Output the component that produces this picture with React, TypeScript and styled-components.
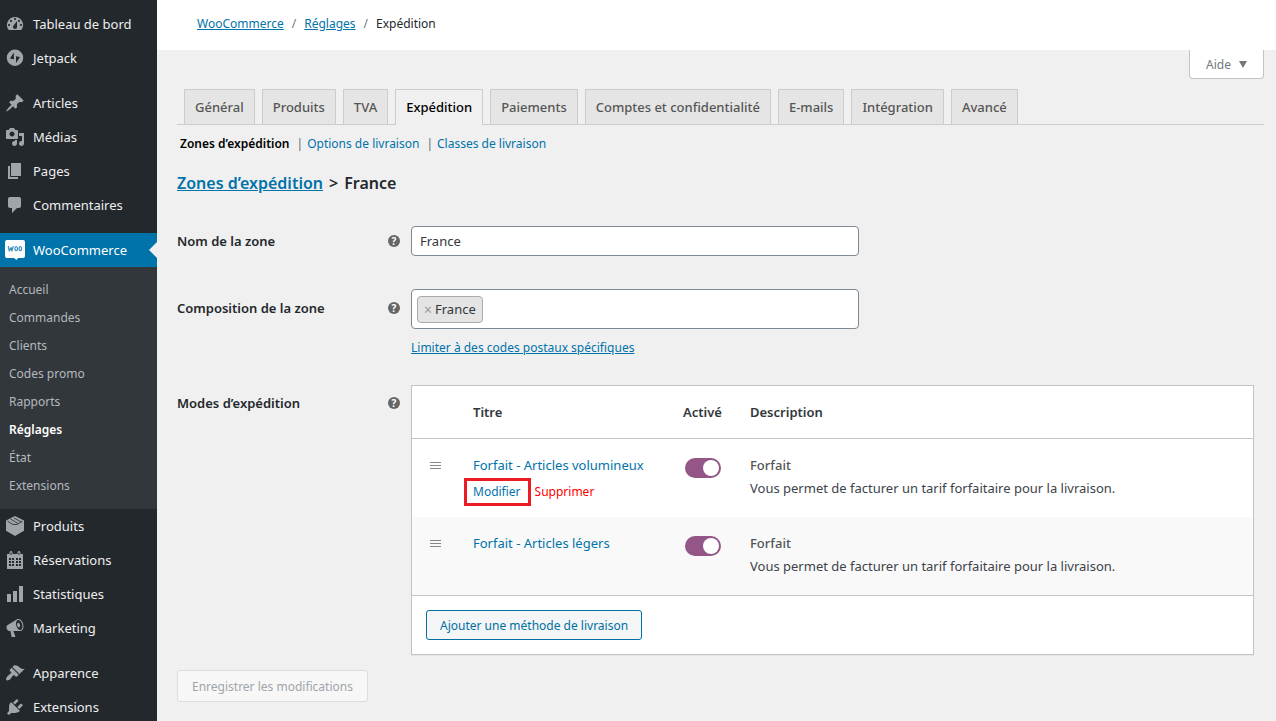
import React, { useState } from "react";
import styled, { createGlobalStyle } from "styled-components";

const Global = createGlobalStyle`
  *, *::before, *::after { box-sizing: border-box; }
  body {
    margin: 0;
    background: #f0f0f0;
    color: #3c434a;
    font-family: "Noto Sans", "Open Sans", sans-serif;
    font-size: 13px;
    line-height: 20px;
  }
  a { color: #0073aa; }
  button, input { font: inherit; }
`;

const Shell = styled.div`
  display: flex;
  height: 100vh;
  overflow: hidden;
`;

/* ---------- side menu ---------- */

const Side = styled.nav`
  flex: 0 0 157px;
  padding-top: 7px;
  background: #23282d;
`;

const Menu = styled.ul`
  list-style: none;
  margin: 0 0 11px;
  padding: 0;
`;

const MenuLink = styled.a<{ $active?: boolean }>`
  position: relative;
  display: flex;
  align-items: center;
  gap: 8px;
  height: 34px;
  padding-left: 5px;
  color: ${(p) => (p.$active ? "#fff" : "#eee")};
  background: ${(p) => (p.$active ? "#0073aa" : "transparent")};
  font-size: 13px;
  text-decoration: none;
  svg { flex: none; fill: ${(p) => (p.$active ? "#fff" : "#a0a5aa")}; }
  &::after {
    content: "";
    display: ${(p) => (p.$active ? "block" : "none")};
    position: absolute;
    right: 0;
    border: 8px solid transparent;
    border-left-width: 0;
    border-right-color: #f0f0f0;
  }
`;

const SubMenu = styled.ul`
  list-style: none;
  margin: 0;
  padding: 9px 0;
  background: #32373c;
`;

const SubLink = styled.a<{ $current?: boolean }>`
  display: block;
  padding: 4px 9px;
  font-size: 12px;
  font-weight: ${(p) => (p.$current ? 600 : 400)};
  color: ${(p) => (p.$current ? "#fff" : "#b4b9be")};
  text-decoration: none;
`;

/* ---------- page frame ---------- */

const Page = styled.div`
  flex: 1;
  min-width: 0;
`;

const TopBar = styled.header`
  display: flex;
  align-items: center;
  height: 50px;
  padding: 0 40px 2px;
  background: #fff;
  font-size: 12px;
  color: #23282d;
`;

const Slash = styled.span`
  margin: 0 8px;
  color: #6c7781;
`;

const HelpRow = styled.div`
  display: flex;
  justify-content: flex-end;
  height: 39px;
  padding-right: 12px;
`;

const HelpTab = styled.button`
  display: flex;
  align-items: center;
  gap: 8px;
  height: 29px;
  padding: 1px 16px 0;
  border: 1px solid #c3c4c7;
  border-top: 0;
  border-radius: 0 0 4px 4px;
  background: #fff;
  color: #72777c;
  font-size: 12px;
`;

const Content = styled.main`
  padding: 0 12px 0 20px;
`;

const Tabs = styled.nav`
  display: flex;
  gap: 7px;
  padding-left: 7px;
  border-bottom: 1px solid #ccc;
`;

const Tab = styled.a<{ $active?: boolean }>`
  height: ${(p) => (p.$active ? 36 : 35)}px;
  margin-bottom: ${(p) => (p.$active ? -1 : 0)}px;
  padding: 7px 10px;
  border: 1px solid #ccc;
  border-bottom: 0;
  background: ${(p) => (p.$active ? "#f0f0f0" : "#e5e5e5")};
  color: ${(p) => (p.$active ? "#000" : "#555")};
  font-size: 13px;
  font-weight: 500;
  text-decoration: none;
  white-space: nowrap;
`;

const SubNav = styled.nav`
  display: flex;
  padding: 9px 3px 7px;
  font-size: 12px;
  color: #666;
  a { text-decoration: none; }
  a + a::before { content: "|"; margin: 0 4px 0 7px; color: #666; }
  a[aria-current] { color: #000; font-weight: 600; }
`;

const Title = styled.h1`
  margin: 9px 0 30px;
  font-size: 16px;
  line-height: 26px;
  font-weight: 600;
  color: #23282d;
  span { margin: 0 6px; }
`;

/* ---------- form ---------- */

const Field = styled.div<{ $gap: number }>`
  display: grid;
  grid-template-columns: 223px minmax(0, 1fr);
  column-gap: 11px;
  align-items: start;
  margin-bottom: ${(p) => p.$gap}px;
  padding-right: 10px;
`;

const LabelCell = styled.div<{ $top: number }>`
  display: flex;
  justify-content: space-between;
  align-items: center;
  padding-top: ${(p) => p.$top}px;
  font-weight: 600;
  color: #23282d;
`;

const HelpMark = styled.span`
  display: grid;
  place-items: center;
  width: 12px;
  height: 12px;
  border-radius: 50%;
  background: #666;
  color: #fff;
  font-size: 10px;
  line-height: 12px;
  font-weight: 700;
`;

const TextInput = styled.input`
  display: block;
  width: 100%;
  max-width: 448px;
  height: 30px;
  padding: 0 8px;
  border: 1px solid #7e8993;
  border-radius: 4px;
  background: #fff;
  color: #32373c;
  font-size: 13px;
`;

const TokenBox = styled.div`
  display: flex;
  align-items: center;
  max-width: 448px;
  height: 40px;
  margin-bottom: 8px;
  padding: 0 5px;
  border: 1px solid #7e8993;
  border-radius: 4px;
  background: #fff;
  input { flex: 1; min-width: 0; border: 0; outline: 0; background: none; }
`;

const Token = styled.span`
  display: flex;
  align-items: center;
  height: 27px;
  padding: 0 6px;
  border: 1px solid #aaa;
  border-radius: 4px;
  background: #e4e4e4;
  color: #32373c;
  button { padding: 2px 3px 0 0; border: 0; background: none; color: #999; font-size: 14px; }
`;

const FieldLink = styled.a`
  font-size: 12px;
`;

const Panel = styled.div`
  border: 1px solid #c3c4c7;
  background: #fff;
  box-shadow: 0 1px 1px rgba(0, 0, 0, 0.04);
`;

const Table = styled.table`
  width: 100%;
  border-collapse: separate;
  border-spacing: 0;
  table-layout: fixed;
  th, td { padding: 0; text-align: left; vertical-align: top; }
  thead th { height: 53px; vertical-align: middle; border-bottom: 1px solid #c3c4c7; font-weight: 600; color: #32373c; }
  tbody tr { height: 78px; }
  tbody tr:nth-child(even) { background: #f9f9f9; }
  tbody td { padding-top: 16px; }
  tbody a { text-decoration: none; }
  p { margin: 3px 0 0; }
`;

const Kind = styled.strong`
  font-weight: 500;
  color: #555;
`;

const Col = styled.col<{ $w?: number }>`
  width: ${(p) => (p.$w ? p.$w + "px" : "auto")};
`;

const Grip = styled.span`
  display: block;
  width: 11px;
  height: 7px;
  margin: 7px 0 0 18px;
  border: solid #888;
  border-width: 1px 0;
  background: linear-gradient(#888, #888) 0 2px / 100% 1px no-repeat;
`;

const Actions = styled.div`
  display: flex;
  gap: 14px;
  margin-top: 7px;
  font-size: 12px;
`;

const Highlighted = styled.a`
  position: relative;
  &::after {
    content: "";
    position: absolute;
    inset: -4px -10px -4px -9px;
    border: 3px solid #ed1c24;
  }
`;

const Remove = styled.a`
  color: #f00;
`;

const Toggle = styled.input`
  appearance: none;
  display: block;
  width: 36px;
  height: 20px;
  margin: 3px 0 0 2px;
  border: 2px solid #935687;
  border-radius: 10px;
  background: #999;
  &::before {
    content: "";
    display: block;
    width: 16px;
    height: 16px;
    border-radius: 50%;
    background: #fff;
  }
  &:checked { background: #935687; }
  &:checked::before { margin-left: 16px; }
`;

const PanelFoot = styled.div`
  padding: 14px;
  border-top: 1px solid #c3c4c7;
`;

const AddButton = styled.button`
  height: 30px;
  padding: 1px 13px 0;
  border: 1px solid #0071a1;
  border-radius: 3px;
  background: #f3f5f6;
  color: #0071a1;
  font-size: 12px;
`;

const SaveButton = styled.button`
  height: 32px;
  padding: 1px 14px 0;
  border: 1px solid #ddd;
  border-radius: 3px;
  background: #f7f7f7;
  color: #a0a5aa;
  font-size: 12px;
`;

/* ---------- icons ---------- */

const Icon = ({ children }: { children: React.ReactNode }) => (
  <svg width="20" height="20" viewBox="0 0 20 20" aria-hidden="true" fillRule="evenodd">
    {children}
  </svg>
);

const icons = {
  dashboard: <path d="M3.76 16h12.48A7.998 7.998 0 0 0 10 3a7.998 7.998 0 0 0-6.24 13zM10 4c.55 0 1 .45 1 1s-.45 1-1 1-1-.45-1-1 .45-1 1-1zM6 6c.55 0 1 .45 1 1s-.45 1-1 1-1-.45-1-1 .45-1 1-1zm8 0c.55 0 1 .45 1 1s-.45 1-1 1-1-.45-1-1 .45-1 1-1zm-5.37 5.55L12 7v6c0 1.1-.9 2-2 2s-2-.9-2-2c0-.57.24-1.08.63-1.45zM4 10c.55 0 1 .45 1 1s-.45 1-1 1-1-.45-1-1 .45-1 1-1zm12 0c.55 0 1 .45 1 1s-.45 1-1 1-1-.45-1-1 .45-1 1-1z" />,
  jetpack: <path d="M10 1.500a8.250 8.250 0 1 0 0 16.500 8.250 8.250 0 0 0 0-16.500zM8.900 4.500v6.800L4.900 10.400zM11 8.200l4 .9-4 6z" />,
  pin: <path d="M10.440 3.020l1.820-1.820 6.360 6.350-1.830 1.820c-1.050-.68-2.480-.57-3.410.36l-.75.75c-.92.93-1.040 2.350-.35 3.410l-1.830 1.820-2.410-2.410-2.800 2.790c-.42.42-3.380 2.710-3.800 2.290s1.860-3.390 2.280-3.810l2.790-2.790L4.100 9.360l1.830-1.820c1.050.69 2.480.57 3.400-.36l.75-.75c.93-.92 1.050-2.350.36-3.410z" />,
  media: <path d="M13 11V4c0-.55-.45-1-1-1h-1.670L9 1H5L3.670 3H2c-.55 0-1 .45-1 1v7c0 .55.45 1 1 1h10c.55 0 1-.45 1-1zM7 4.500c1.380 0 2.500 1.120 2.500 2.500S8.380 9.500 7 9.500 4.500 8.380 4.500 7 5.620 4.500 7 4.500zM14 6h5v10.500c0 1.380-1.120 2.500-2.500 2.500S14 17.880 14 16.500s1.120-2.500 2.500-2.500c.17 0 .34.02.5.05V9h-3V6zm-4 8.050V13h2v3.500c0 1.380-1.120 2.500-2.500 2.500S7 17.880 7 16.500 8.120 14 9.500 14c.17 0 .34.02.5.05z" />,
  pages: <path d="M6 15V2h10v13H6zm-1 1h8v2H3V5h2v11z" />,
  comment: <path d="M5 2h9c1.100 0 2 .9 2 2v7c0 1.100-.9 2-2 2h-2l-5 5v-5H5c-1.100 0-2-.9-2-2V4c0-1.100.9-2 2-2z" />,
  woo: (
    <>
      <path d="M2 0h16a2 2 0 0 1 2 2v14a2 2 0 0 1-2 2h-5l-1.500 2L9 18H2a2 2 0 0 1-2-2V2a2 2 0 0 1 2-2z" />
      <g fill="none" stroke="#3a92be" strokeWidth="1.200" strokeLinecap="round" strokeLinejoin="round">
        <path d="M3.300 6.500l1 4.500 1.700-3.500.9 3.500 1.300-4.500" />
        <ellipse cx="11.200" cy="8.700" rx="1.300" ry="2" />
        <ellipse cx="15.300" cy="8.700" rx="1.300" ry="2" />
      </g>
    </>
  ),
  box: (
    <>
      <path d="M10 0l9 4.500v10.300L10 20l-9-5.200V4.500z" />
      <path d="M2.500 5.200L8 8.500h4l5.500-3.300M5.500 3l7.500 4.500M9 2l7.500 4" fill="none" stroke="#23282d" strokeWidth=".8" />
    </>
  ),
  calendar: (
    <path d="M2 4h2.500V2.500a1.500 1.500 0 0 1 3 0V4h5V2.500a1.500 1.500 0 0 1 3 0V4H18v15H2zM5.500 2.500V5h1V2.500zM13.500 2.500V5h1V2.500zM4 8h2v2H4zM7 8h2v2H7zM11 8h2v2h-2zM14 8h2v2h-2zM4 11h2v2H4zM7 11h2v2H7zM11 11h2v2h-2zM14 11h2v2h-2zM4 14h2v2H4zM7 14h2v2H7zM11 14h2v2h-2zM14 14h2v2h-2z" />
  ),
  chart: <path d="M18 18V2h-4v16h4zm-6 0V7H8v11h4zm-6 0v-8H2v8h4z" />,
  megaphone: <path d="M18.150 5.940c.46 1.620.38 3.220-.02 4.480-.42 1.280-1.260 2.180-2.300 2.480-.16.06-.26.06-.4.06-.06.02-.12.02-.18.02-.06.02-.14.02-.22.02h-6.800l2.220 5.500c.02.14-.06.26-.14.34-.08.1-.24.16-.34.16H6.950c-.1 0-.26-.06-.34-.16-.08-.08-.16-.2-.14-.34l-1-5.500H4.250l-.02-.02c-.5.06-1.080-.18-1.540-.62s-.88-1.080-1.060-1.880c-.24-.8-.2-1.560-.02-2.200.18-.62.58-1.080 1.060-1.300l.02-.02 9-5.400c.1-.06.18-.1.24-.16.06-.04.14-.08.24-.12.16-.08.28-.12.5-.18 1.040-.3 2.240.1 3.220.98s1.840 2.240 2.260 3.860zm-2.580 5.980h-.02c.4-.1.74-.34 1.040-.7.58-.7.86-1.760.86-3.040 0-.64-.1-1.300-.28-1.980-.34-1.360-1.020-2.500-1.780-3.240s-1.680-1.100-2.460-.88c-.82.22-1.400.96-1.700 2-.32 1.040-.28 2.360.06 3.720.38 1.360 1 2.500 1.800 3.240.78.74 1.620 1.100 2.480.88zm-2.540-7.080c.22-.04.42-.02.62.04.38.16.76.48 1.020 1s.42 1.200.42 1.780c0 .3-.04.56-.12.8-.18.48-.44.84-.86.94-.34.1-.8-.06-1.140-.4s-.64-.86-.78-1.500c-.18-.62-.12-1.240.02-1.720s.48-.84.82-.94z" />,
  brush: <path d="M14.480 11.060L7.410 3.990l1.500-1.500c.5-.56 2.300-.47 3.510.32 1.210.8 1.430 1.280 2.910 2.100 1.180.64 2.450 1.260 4.450.85zm-.71.71L6.700 4.700 4.930 6.470c-.39.39-.39 1.020 0 1.410l1.060 1.060c.39.39.39 1.030 0 1.420-.6.6-1.430 1.110-2.210 1.690-.35.26-.7.53-1.010.84C1.430 14.230.4 16.080 1.400 17.070c.99 1 2.840-.03 4.180-1.360.31-.31.58-.66.85-1.020.57-.78 1.080-1.610 1.690-2.210.39-.39 1.020-.39 1.410 0l1.060 1.060c.39.39 1.020.39 1.410 0z" />,
  plug: <path d="M13.110 4.360L9.870 7.600 8 5.730l3.240-3.240c.35-.34 1.050-.2 1.560.32.52.51.66 1.210.31 1.550zm-8 1.770l.91-1.120 9.010 9.010-1.190.84c-.71.71-2.630 1.160-3.820 1.160H6.140L4.900 17.260c-.59.59-1.540.59-2.120 0-.59-.58-.59-1.530 0-2.120l1.240-1.240v-3.880c0-1.130.4-3.190 1.090-3.890zm7.260 3.970l3.240-3.240c.34-.35 1.040-.21 1.550.31.52.51.66 1.210.31 1.550l-3.240 3.250z" />,
};

/* ---------- data ---------- */

type Entry = { label: string; icon: keyof typeof icons; sub?: string[] };

const menuGroups: Entry[][] = [
  [
    { label: "Tableau de bord", icon: "dashboard" },
    { label: "Jetpack", icon: "jetpack" },
  ],
  [
    { label: "Articles", icon: "pin" },
    { label: "Médias", icon: "media" },
    { label: "Pages", icon: "pages" },
    { label: "Commentaires", icon: "comment" },
  ],
  [
    {
      label: "WooCommerce",
      icon: "woo",
      sub: ["Accueil", "Commandes", "Clients", "Codes promo", "Rapports", "Réglages", "État", "Extensions"],
    },
    { label: "Produits", icon: "box" },
    { label: "Réservations", icon: "calendar" },
    { label: "Statistiques", icon: "chart" },
    { label: "Marketing", icon: "megaphone" },
  ],
  [
    { label: "Apparence", icon: "brush" },
    { label: "Extensions", icon: "plug" },
  ],
];

const tabs = ["Général", "Produits", "TVA", "Expédition", "Paiements", "Comptes et confidentialité", "E-mails", "Intégration", "Avancé"];

const methods = [
  { title: "Forfait - Articles volumineux", open: true },
  { title: "Forfait - Articles légers", open: false },
];

const Help = () => <HelpMark aria-label="Aide">?</HelpMark>;

export default function App() {
  const [name, setName] = useState("France");
  return (
    <>
      <Global />
      <Shell>
        <Side>
          {menuGroups.map((group, i) => (
            <Menu key={i}>
              {group.map((e) => (
                <li key={e.label}>
                  <MenuLink href="#" $active={!!e.sub}>
                    <Icon>{icons[e.icon]}</Icon>
                    {e.label}
                  </MenuLink>
                  {e.sub && (
                    <SubMenu>
                      {e.sub.map((s) => (
                        <li key={s}>
                          <SubLink href="#" $current={s === "Réglages"}>{s}</SubLink>
                        </li>
                      ))}
                    </SubMenu>
                  )}
                </li>
              ))}
            </Menu>
          ))}
        </Side>
        <Page>
          <TopBar>
            <a href="#">WooCommerce</a>
            <Slash>/</Slash>
            <a href="#">Réglages</a>
            <Slash>/</Slash>
            <span>Expédition</span>
          </TopBar>
          <HelpRow>
            <HelpTab type="button">
              Aide
              <svg width="8" height="7" viewBox="0 0 8 7" aria-hidden="true">
                <path d="M0 0h8L4 7z" fill="#72777c" />
              </svg>
            </HelpTab>
          </HelpRow>
          <Content>
            <Tabs>
              {tabs.map((t) => (
                <Tab key={t} href="#" $active={t === "Expédition"}>{t}</Tab>
              ))}
            </Tabs>
            <SubNav>
              <a href="#" aria-current="page">Zones d’expédition</a>
              <a href="#">Options de livraison</a>
              <a href="#">Classes de livraison</a>
            </SubNav>
            <Title>
              <a href="#">Zones d’expédition</a>
              <span>&gt;</span>
              France
            </Title>
            <Field $gap={33}>
              <LabelCell $top={5}>
                <label htmlFor="zone-name">Nom de la zone</label>
                <Help />
              </LabelCell>
              <TextInput id="zone-name" value={name} onChange={(e) => setName(e.target.value)} />
            </Field>
            <Field $gap={27}>
              <LabelCell $top={9}>
                <label htmlFor="zone-regions">Composition de la zone</label>
                <Help />
              </LabelCell>
              <div>
                <TokenBox>
                  <Token>
                    <button type="button" aria-label="Retirer France">×</button>
                    France
                  </Token>
                  <input id="zone-regions" type="text" />
                </TokenBox>
                <FieldLink href="#">Limiter à des codes postaux spécifiques</FieldLink>
              </div>
            </Field>
            <Field $gap={15}>
              <LabelCell $top={8}>
                <span>Modes d’expédition</span>
                <Help />
              </LabelCell>
              <Panel>
                <Table>
                  <colgroup>
                    <Col $w={61} />
                    <Col $w={210} />
                    <Col $w={67} />
                    <Col />
                  </colgroup>
                  <thead>
                    <tr>
                      <th />
                      <th>Titre</th>
                      <th>Activé</th>
                      <th>Description</th>
                    </tr>
                  </thead>
                  <tbody>
                    {methods.map((m) => (
                      <tr key={m.title}>
                        <td><Grip /></td>
                        <td>
                          <a href="#">{m.title}</a>
                          {m.open && (
                            <Actions>
                              <Highlighted href="#">Modifier</Highlighted>
                              <Remove href="#">Supprimer</Remove>
                            </Actions>
                          )}
                        </td>
                        <td><Toggle type="checkbox" defaultChecked aria-label={m.title} /></td>
                        <td>
                          <Kind>Forfait</Kind>
                          <p>Vous permet de facturer un tarif forfaitaire pour la livraison.</p>
                        </td>
                      </tr>
                    ))}
                  </tbody>
                </Table>
                <PanelFoot>
                  <AddButton type="button">Ajouter une méthode de livraison</AddButton>
                </PanelFoot>
              </Panel>
            </Field>
            <SaveButton type="button" disabled>Enregistrer les modifications</SaveButton>
          </Content>
        </Page>
      </Shell>
    </>
  );
}
